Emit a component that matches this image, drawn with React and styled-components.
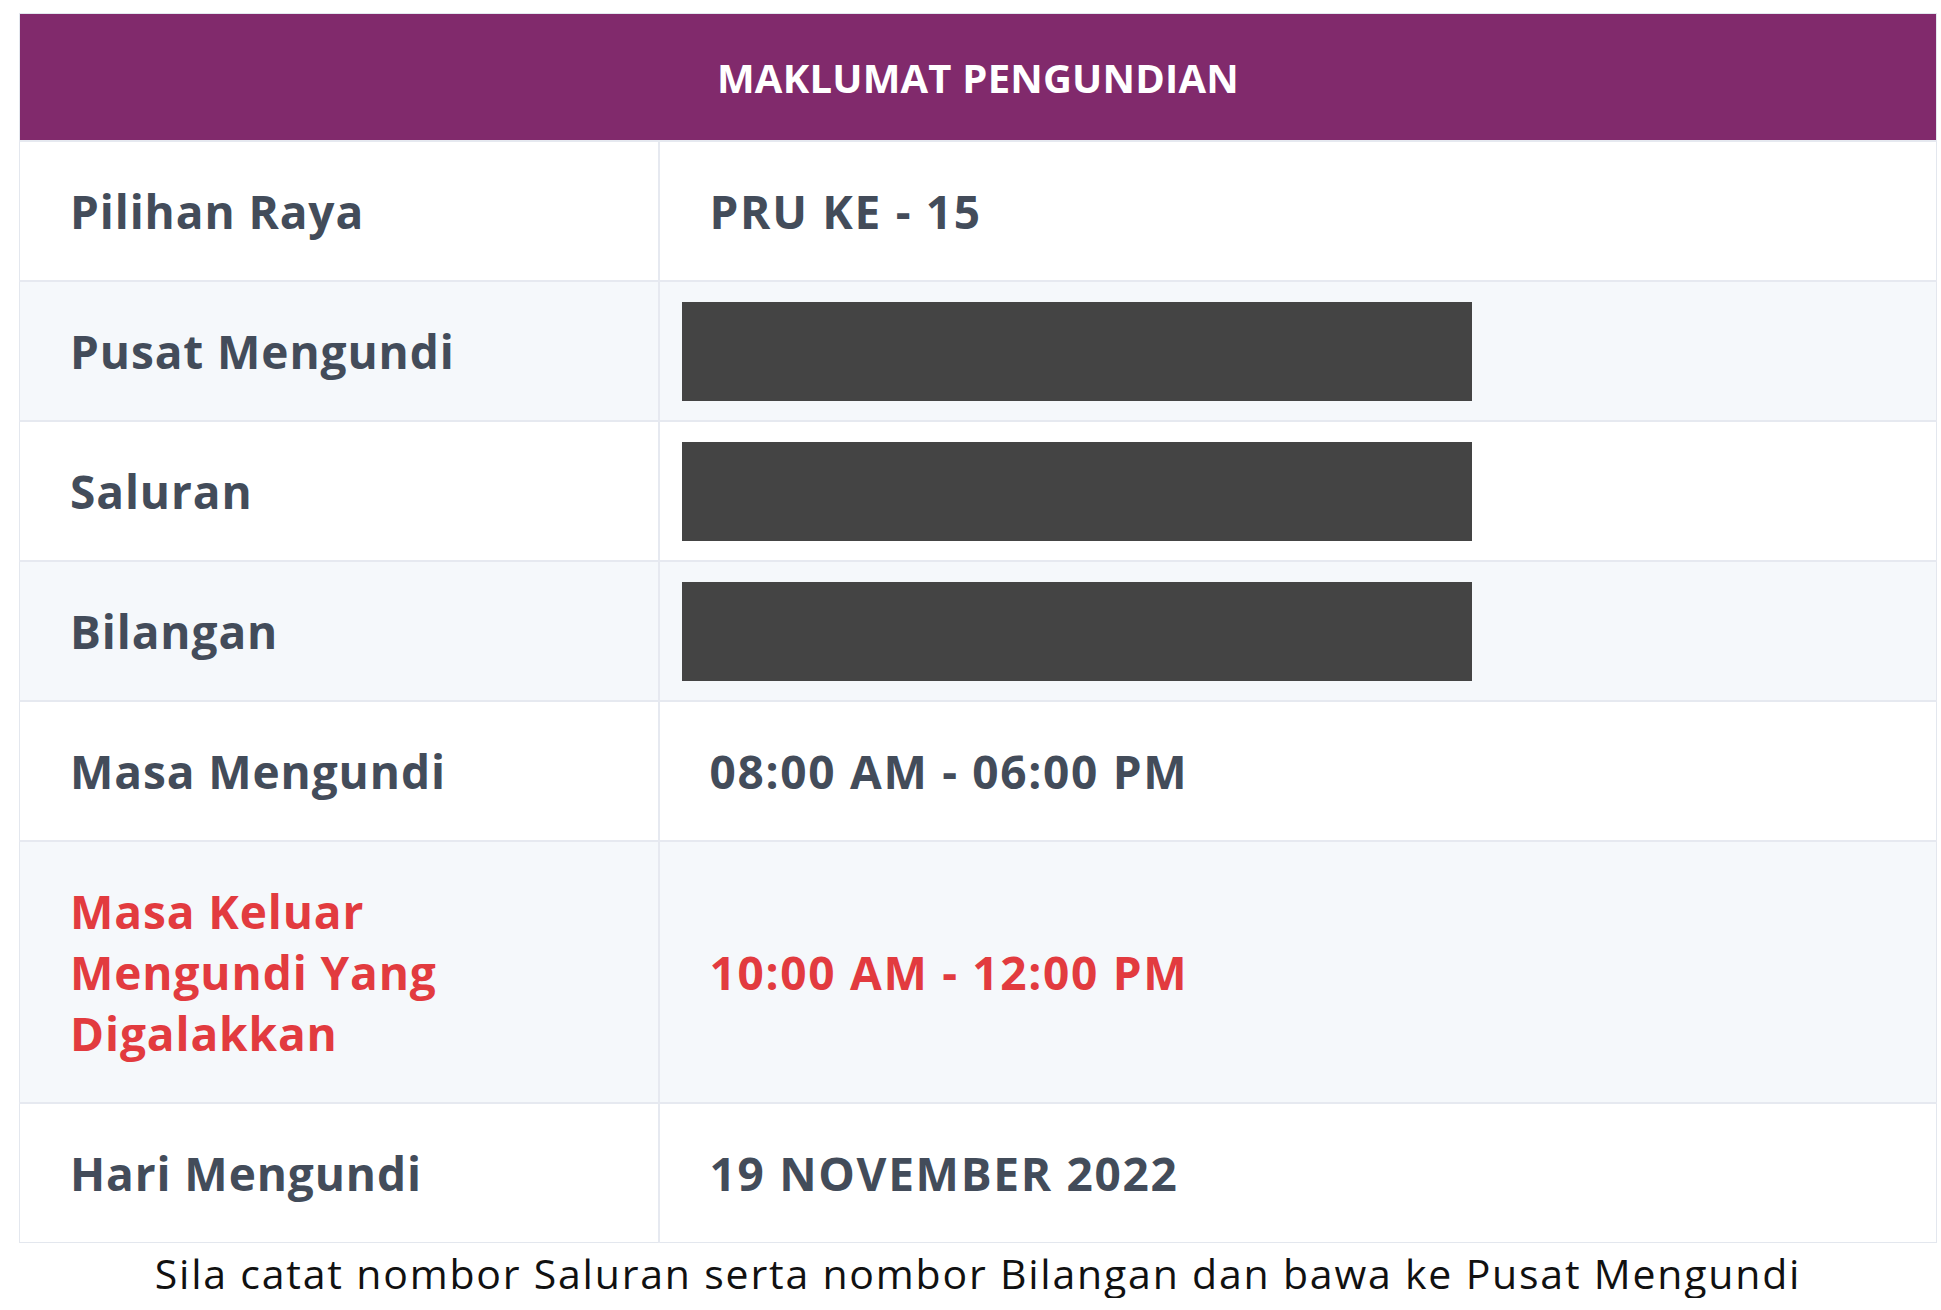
import React from "react";
import styled, { createGlobalStyle } from "styled-components";

const GlobalStyle = createGlobalStyle`
    body{
        margin: 0;
        background: #ffffff;
        font-family: "Open Sans", "Lato", sans-serif;
    }
`

const Page = styled.div`
    box-sizing: border-box;
    width: 1941px;
    padding: 13px 4px 0 19px;
`

const InfoTable = styled.table`
    width: 1918px;
    border-collapse: collapse;
    border: 1px solid #e3e7ee;
    table-layout: fixed;
`

const LabelCol = styled.col`
    width: 639px;
`

const HeadCell = styled.th`
    height: 126px;
    padding: 0;
    background: #812a6c;
    color: #ffffff;
    font-size: 40px;
    font-weight: 700;
    letter-spacing: 0.2px;
    text-align: center;
    text-transform: uppercase;
    border-bottom: 2px solid #e6e9f0;
`

const Row = styled.tr`
    background: ${props => props.$striped ? "#f5f8fb" : "#ffffff"};
    border-top: 2px solid #e6e9f0;
`

const LabelCell = styled.td`
    box-sizing: border-box;
    padding: 39px 40px 38px 50px;
    font-size: 46px;
    line-height: 61px;
    font-weight: 700;
    letter-spacing: 0.9px;
    color: ${props => props.$alert ? "#e23b3f" : "#434c5a"};
    border-right: 2px solid #e6e9f0;
    vertical-align: middle;
`

const ValueCell = styled.td`
    padding: ${props => props.$redacted ? "18px 22px" : "39px 50px 38px"};
    font-size: 46px;
    line-height: 61px;
    font-weight: 700;
    letter-spacing: 1.7px;
    color: ${props => props.$alert ? "#e23b3f" : "#434c5a"};
    vertical-align: middle;
`

const Redacted = styled.div`
    width: 790px;
    height: 99px;
    background: #444444;
`

const Note = styled.p`
    margin: 6px 0 0;
    width: 1918px;
    text-align: center;
    font-size: 41px;
    line-height: 1.2;
    font-weight: 400;
    letter-spacing: 1.8px;
    color: #111111;
`

const rows = [
    { label: "Pilihan Raya", value: "PRU KE - 15" },
    { label: "Pusat Mengundi", redacted: true },
    { label: "Saluran", redacted: true },
    { label: "Bilangan", redacted: true },
    { label: "Masa Mengundi", value: "08:00 AM - 06:00 PM" },
    { label: "Masa Keluar Mengundi Yang Digalakkan", value: "10:00 AM - 12:00 PM", alert: true },
    { label: "Hari Mengundi", value: "19 NOVEMBER 2022" },
];

const App = () => {
    return (
        <Page>
            <GlobalStyle />
            <InfoTable>
                <colgroup>
                    <LabelCol />
                    <col />
                </colgroup>
                <thead>
                    <tr>
                        <HeadCell colSpan={2}>Maklumat Pengundian</HeadCell>
                    </tr>
                </thead>
                <tbody>
                    {rows.map((r, i) => (
                        <Row key={r.label} $striped={i % 2 === 1}>
                            <LabelCell $alert={r.alert}>
                                {r.alert ? <>Masa Keluar<br />Mengundi Yang<br />Digalakkan</> : r.label}
                            </LabelCell>
                            <ValueCell $alert={r.alert} $redacted={r.redacted}>
                                {r.redacted ? <Redacted /> : r.value}
                            </ValueCell>
                        </Row>
                    ))}
                </tbody>
            </InfoTable>
            <Note>Sila catat nombor Saluran serta nombor Bilangan dan bawa ke Pusat Mengundi</Note>
        </Page>
    )
}

export default App;
